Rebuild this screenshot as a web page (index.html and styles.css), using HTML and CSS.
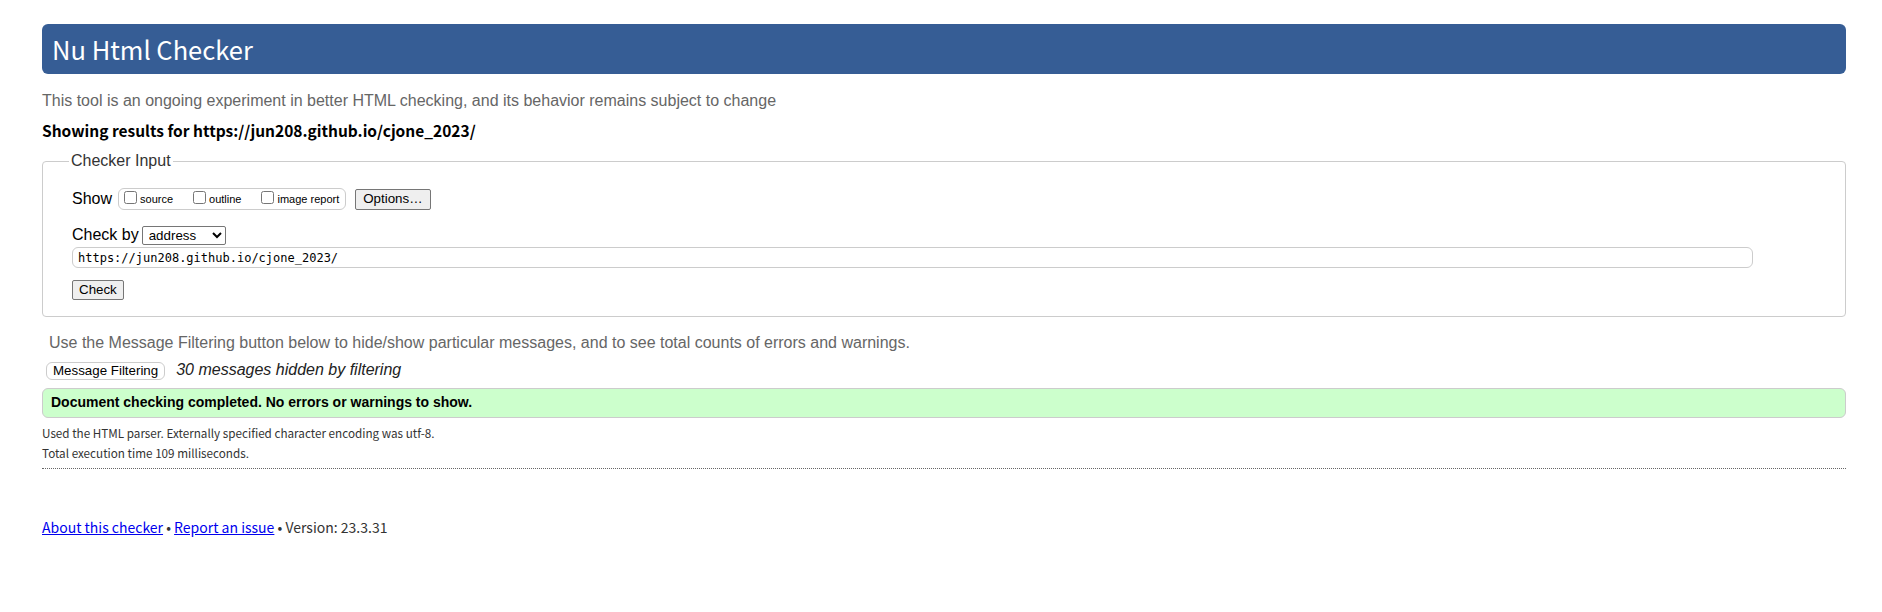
FILE: index.html
```html
<!DOCTYPE html>
<html lang="en">
<head>
<meta charset="utf-8">
<title>Showing results for https://jun208.github.io/cjone_2023/ - Nu Html Checker</title>
<link rel="stylesheet" href="styles.css">
</head>
<body>
<h1 class="title">Nu Html Checker</h1>
<p class="intro">This tool is an ongoing experiment in better HTML checking, and its behavior remains subject to change</p>
<p class="showing">Showing results for https://jun208.github.io/cjone_2023/</p>
<form class="input-form">
<fieldset class="checker">
<legend class="checker-legend">Checker Input</legend>
<div class="row row-show">
<span class="show-label">Show</span>
<span class="show-box">
<label class="opt"><input type="checkbox" class="cb"><span>source</span></label>
<label class="opt"><input type="checkbox" class="cb"><span>outline</span></label>
<label class="opt"><input type="checkbox" class="cb"><span>image report</span></label>
</span>
<button type="button" class="btn btn-options">Options…</button>
</div>
<div class="row row-by">
<span class="by-label">Check by</span>
<select class="by-select"><option>address</option></select>
</div>
<div class="row row-url">
<input type="text" class="url" value="https://jun208.github.io/cjone_2023/">
</div>
<div class="row row-check">
<button type="button" class="btn btn-check">Check</button>
</div>
</fieldset>
</form>
<p class="filter-hint">Use the Message Filtering button below to hide/show particular messages, and to see total counts of errors and warnings.</p>
<div class="filter-row">
<button type="button" class="btn-filter">Message Filtering</button>
<span class="hidden-count">30 messages hidden by filtering</span>
</div>
<p class="success">Document checking completed. No errors or warnings to show.</p>
<p class="note">Used the HTML parser. Externally specified character encoding was utf-8.</p>
<p class="note">Total execution time 109 milliseconds.</p>
<hr class="rule">
<p class="footer"><a href="#" class="link">About this checker</a> • <a href="#" class="link">Report an issue</a> • Version: 23.3.31</p>
</body>
</html>
```
FILE: styles.css
```css
html, body {
  background: #fff;
}
body {
  margin: 0;
  padding: 24px 36px 40px 42px;
  font-family: "Liberation Sans", Arial, sans-serif;
  font-size: 16px;
  color: #000;
}
.title {
  margin: 0;
  height: 50px;
  line-height: 50px;
  padding: 0 10px;
  background: #365d95;
  color: #fff;
  border-radius: 6px;
  font-family: "Noto Sans CJK KR", "Noto Sans", sans-serif;
  font-weight: normal;
  font-size: 25.5px;
}
.intro {
  margin: 17px 0 0;
  line-height: 20px;
  color: #666;
}
.showing {
  margin: 9px 0 0;
  line-height: 20px;
  font-family: "Noto Sans CJK KR", "Noto Sans", sans-serif;
  font-weight: bold;
  font-size: 15.5px;
}
.input-form {
  margin: 11px 0 0;
}
.checker {
  margin: 0;
  padding: 17px 20px 16px 29px;
  border: 1px solid #ccc;
  border-radius: 4px;
}
.checker-legend {
  margin-left: -3px;
  padding: 0 2px;
  line-height: 20px;
  color: #333;
}
.row {
  display: flex;
  align-items: center;
}
.row-show {
  height: 22px;
}
.show-label {
  margin-right: 6px;
}
.show-box {
  display: inline-flex;
  align-items: baseline;
  height: 20px;
  padding: 0 6px 0 5px;
  border: 1px solid #ccc;
  border-radius: 6px;
  font-size: 11px;
  line-height: 20px;
}
.opt {
  display: inline-flex;
  align-items: baseline;
  margin-right: 20px;
}
.opt:last-child {
  margin-right: 0;
}
.cb {
  margin: 0 3px 0 0;
  width: 13px;
  height: 13px;
  position: relative;
  top: 1px;
}
.btn {
  font-family: "Liberation Sans", Arial, sans-serif;
  font-size: 13.33px;
  color: #000;
  background: #efefef;
  border: 1px solid #767676;
  border-radius: 2px;
  padding: 1px 6px;
  line-height: 16px;
}
.btn-options {
  margin-left: 9px;
  height: 21px;
  padding: 1px 7px;
}
.row-by {
  margin-top: 14px;
  height: 22px;
}
.by-label {
  margin-right: 3px;
}
.by-select {
  width: 84px;
  height: 19px;
  font-family: "Liberation Sans", Arial, sans-serif;
  font-size: 13.33px;
  padding: 0 0 0 2px;
  border: 1px solid #767676;
  border-radius: 2px;
  background: #fff;
  color: #000;
}
.row-url {
  margin-top: 1px;
}
.url {
  box-sizing: border-box;
  width: 1681px;
  height: 21px;
  margin: 0;
  padding: 0 5px;
  border: 1px solid #ccc;
  border-radius: 6px;
  font-family: "DejaVu Sans Mono", monospace;
  font-size: 12px;
  color: #000;
}
.row-check {
  margin-top: 12px;
}
.btn-check {
  height: 20px;
}
.filter-hint {
  margin: 16px 0 0 7px;
  line-height: 20px;
  color: #666;
}
.filter-row {
  display: flex;
  align-items: baseline;
  margin: 8px 0 0 4px;
}
.btn-filter {
  height: 18px;
  padding: 0 6px;
  background: #fff;
  border: 1px solid #ccc;
  border-radius: 6px;
  font-family: "Liberation Sans", Arial, sans-serif;
  font-size: 13.33px;
  line-height: 16px;
  color: #000;
}
.hidden-count {
  margin-left: 11px;
  font-style: italic;
  line-height: 18px;
  color: #222;
}
.success {
  margin: 8px 0 0;
  padding: 5px 8px 6px;
  line-height: 17px;
  background: #ccffcc;
  border: 1px solid #ccc;
  border-radius: 6px;
  font-size: 14px;
  font-weight: bold;
}
.note {
  margin: 0;
  line-height: 20px;
  font-family: "Noto Sans CJK KR", "Noto Sans", sans-serif;
  font-size: 11.7px;
  color: #333;
}
.success + .note {
  margin-top: 5px;
}
.rule {
  margin: 5px 0 0;
  height: 0;
  border: 0;
  border-top: 1px dotted #666;
}
.footer {
  margin: 48px 0 0;
  line-height: 20px;
  font-family: "Noto Sans CJK KR", "Noto Sans", sans-serif;
  font-size: 14px;
  color: #333;
}
.link {
  color: #00e;
  text-decoration: underline;
}
```
